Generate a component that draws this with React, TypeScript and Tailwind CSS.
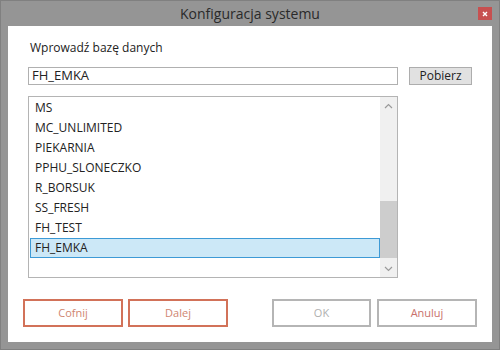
import React from "react";

const items = [
  "MS",
  "MC_UNLIMITED",
  "PIEKARNIA",
  "PPHU_SLONECZKO",
  "R_BORSUK",
  "SS_FRESH",
  "FH_TEST",
  "FH_EMKA",
];

export default function App() {
  return (
    <div
      className="w-[500px] h-[350px] bg-[#959595] border border-[#808080] flex flex-col text-[#222]"
      style={{ fontFamily: '"Open Sans", "Noto Sans", sans-serif' }}
    >
      <div className="relative h-[25px] flex items-center justify-center">
        <span className="text-[14px] text-[#2a2a2a] leading-none">Konfiguracja systemu</span>
        <div className="absolute right-[7px] top-[6px] w-[14px] h-[13px] bg-[#c75050] flex items-center justify-center">
          <svg width="6" height="6" viewBox="0 0 6 6">
            <path d="M1 1L5 5M5 1L1 5" stroke="#fff" strokeWidth="1.4" />
          </svg>
        </div>
      </div>
      <div className="flex-1 mx-[7px] mb-[7px] bg-white flex flex-col">
        <div className="mt-[14px] pl-[22px] text-[12px] leading-[16px]">Wprowadź bazę danych</div>
        <div className="mt-[11px] pl-[20px] flex items-center">
          <div className="w-[370px] h-[18px] border border-[#b0b0b0] flex items-center pl-[3px] text-[13px]">
            FH_EMKA
          </div>
          <button className="ml-[11px] w-[63px] h-[18px] bg-[#e1e1e1] border border-[#adadad] text-[12px] leading-none flex items-center justify-center">
            Pobierz
          </button>
        </div>
        <div className="mt-[11px] ml-[20px] w-[370px] h-[182px] border border-[#b4b4b4] flex">
          <div className="flex-1 pt-[1px] pl-[1px] flex flex-col">
            {items.map((it) => (
              <div
                key={it}
                className={
                  "h-[20px] flex items-center pl-[4px] text-[12px] " +
                  (it === "FH_EMKA"
                    ? "bg-[#cce8f7] border border-[#3d9ad6]"
                    : "border border-transparent")
                }
              >
                {it}
              </div>
            ))}
          </div>
          <div className="w-[17px] bg-[#f0f0f0] flex flex-col items-center">
            <div className="h-[17px] flex items-center justify-center">
              <svg width="9" height="6" viewBox="0 0 9 6">
                <path d="M1 5L4.5 1.5L8 5" stroke="#9a9a9a" strokeWidth="1.2" fill="none" />
              </svg>
            </div>
            <div className="flex-1 w-full flex flex-col">
              <div className="h-[87px]" />
              <div className="h-[57px] bg-[#cdcdcd]" />
              <div className="flex-1" />
            </div>
            <div className="h-[17px] flex items-center justify-center">
              <svg width="9" height="6" viewBox="0 0 9 6">
                <path d="M1 1L4.5 4.5L8 1" stroke="#9a9a9a" strokeWidth="1.2" fill="none" />
              </svg>
            </div>
          </div>
        </div>
        <div className="mt-[21px] px-[15px] flex justify-between">
          <div className="flex gap-[5px]">
            <button className="w-[100px] h-[28px] border-2 border-[#d27259] text-[11px] text-[#d08570]">Cofnij</button>
            <button className="w-[100px] h-[28px] border-2 border-[#d27259] text-[11px] text-[#d08570]">Dalej</button>
          </div>
          <div className="flex gap-[6px]">
            <button className="w-[99px] h-[28px] border-2 border-[#b5b5b5] text-[11px] text-[#b0b0b0]">OK</button>
            <button className="w-[100px] h-[28px] border-2 border-[#b5b5b5] text-[11px] text-[#c9716b]">Anuluj</button>
          </div>
        </div>
      </div>
    </div>
  );
}
